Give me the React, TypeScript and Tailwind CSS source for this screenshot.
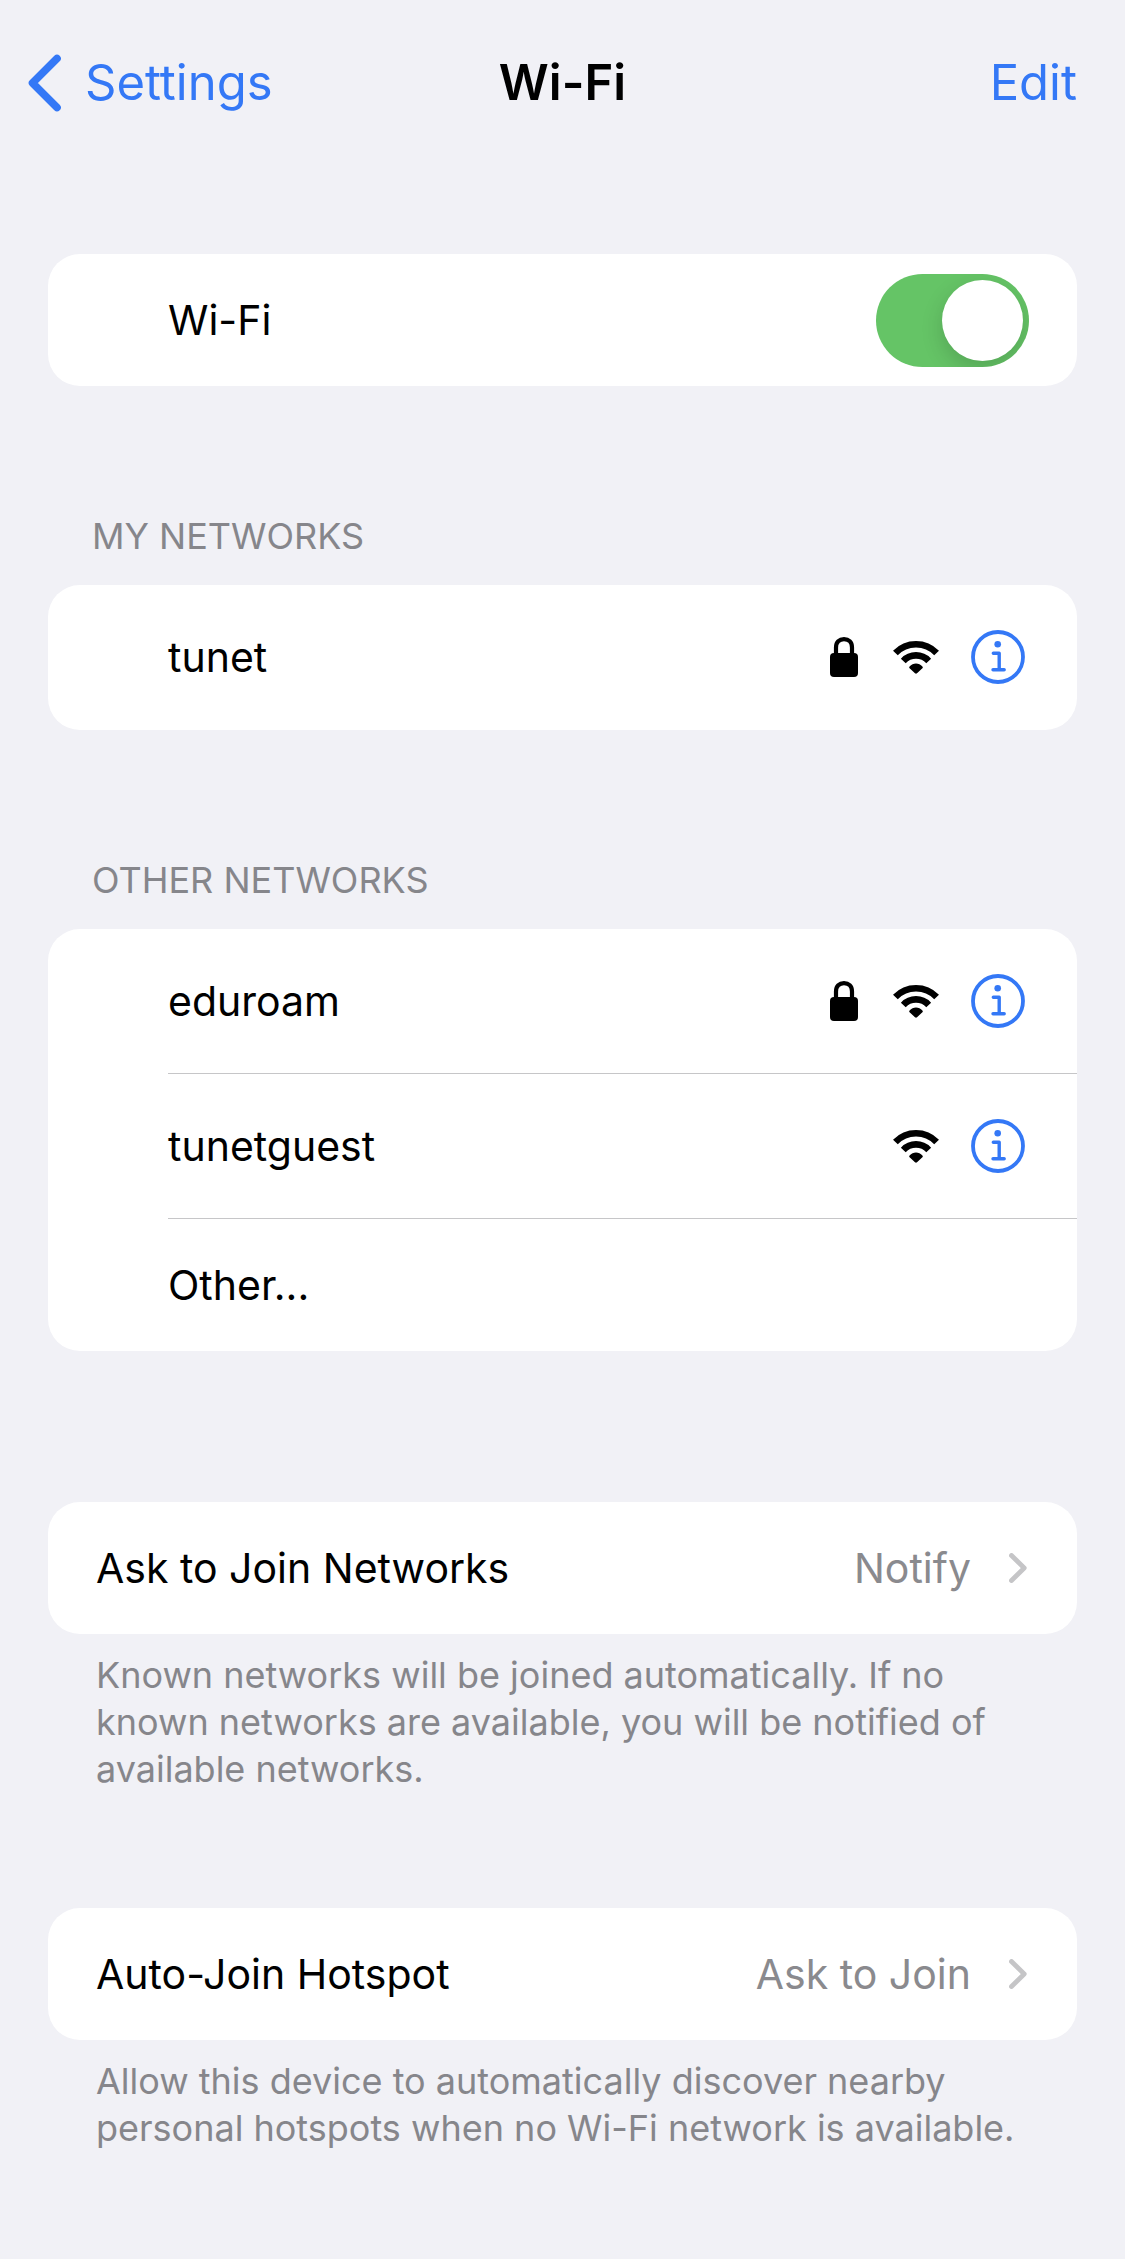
import React, { useState } from "react";

type Network = {
  name: string;
  secured: boolean;
};

const myNetworks: Network[] = [{ name: "tunet", secured: true }];

const otherNetworks: Network[] = [
  { name: "eduroam", secured: true },
  { name: "tunetguest", secured: false },
];

const LockIcon = () => (
  <svg width="28" height="40" viewBox="0 0 28 40" aria-hidden="true">
    <path
      d="M6 18V10.5C6 5.2 9.3 2.1 14 2.1S22 5.2 22 10.5V18"
      fill="none"
      stroke="currentColor"
      strokeWidth="4.2"
    />
    <rect y="16" width="28" height="24" rx="4" fill="currentColor" />
  </svg>
);

const WifiIcon = () => (
  <svg width="46" height="34" viewBox="0 0 46 34" aria-hidden="true">
    <g fill="none" stroke="currentColor" strokeWidth="6.6">
      <path d="M2.4 13A28.6 28.6 0 0 1 43.6 13" />
      <path d="M10.3 20.9A17.4 17.4 0 0 1 35.7 20.9" />
    </g>
    <path
      d="M16.6 26.6C20 22.4 26 22.4 29.4 26.6Q30.2 27.4 29.4 28.2L24 33.3Q23 34.2 22 33.3L16.6 28.2Q15.8 27.4 16.6 26.6Z"
      fill="currentColor"
    />
  </svg>
);

const InfoIcon = () => (
  <svg width="54" height="54" viewBox="0 0 54 54" aria-hidden="true">
    <circle
      cx="27"
      cy="27"
      r="25"
      fill="none"
      stroke="currentColor"
      strokeWidth="3.8"
    />
    <circle cx="26.7" cy="14.3" r="3.3" fill="currentColor" />
    <path
      d="M22.3 23.2H28.2V39.8M22 39.8H33.2"
      fill="none"
      stroke="currentColor"
      strokeWidth="3.4"
      strokeLinecap="round"
      strokeLinejoin="round"
    />
  </svg>
);

const BackIcon = () => (
  <svg width="33" height="58" viewBox="0 0 33 58" aria-hidden="true">
    <path
      d="M29 4.5L4.5 29L29 53.5"
      fill="none"
      stroke="currentColor"
      strokeWidth="7.6"
      strokeLinecap="round"
      strokeLinejoin="round"
    />
  </svg>
);

const ForwardIcon = () => (
  <svg width="18" height="30" viewBox="0 0 18 30" aria-hidden="true">
    <path
      d="M2.5 2.5L15.2 15L2.5 27.5"
      fill="none"
      stroke="#c5c5c7"
      strokeWidth="4.8"
      strokeLinecap="round"
      strokeLinejoin="round"
    />
  </svg>
);

const Card = ({ children }: { children: React.ReactNode }) => (
  <div className="overflow-hidden rounded-[32px] bg-white text-[41px] leading-[52px]">
    {children}
  </div>
);

interface NetworkRowProps {
  network: Network;
  divider?: boolean;
}

const NetworkRow = ({ network, divider }: NetworkRowProps) => (
  <li className="pl-30">
    <div
      className={`flex h-[145px] items-center border-b pr-[52px] ${
        divider ? "border-[#c6c6c8]" : "border-transparent"
      }`}
    >
      <span className="flex-1">{network.name}</span>
      {network.secured && (
        <span className="mr-[35px]">
          <LockIcon />
        </span>
      )}
      <WifiIcon />
      <button
        type="button"
        aria-label={`More info about ${network.name}`}
        className="ml-8 text-[#3478f6]"
      >
        <InfoIcon />
      </button>
    </div>
  </li>
);

interface DisclosureProps {
  label: string;
  value: string;
  note: string;
}

const Disclosure = ({ label, value, note }: DisclosureProps) => (
  <section>
    <Card>
      <button
        type="button"
        className="flex h-33 w-full items-center pr-[50px] pl-12 text-left"
      >
        <span className="flex-1">{label}</span>
        <span className="mr-[38px] text-[#8a8a8e]">{value}</span>
        <ForwardIcon />
      </button>
    </Card>
    <p className="px-12 pt-[18px] text-[36px] leading-[47px] text-[#86868b]">
      {note}
    </p>
  </section>
);

const SectionTitle = ({ children }: { children: React.ReactNode }) => (
  <h2 className="px-11 pt-[126px] pb-[25px] text-[36px] leading-[48px] text-[#86868b]">
    {children}
  </h2>
);

const App = () => {
  const [enabled, setEnabled] = useState(true);

  return (
    <div className="min-h-screen bg-[#f1f1f6] font-['Inter','Liberation_Sans',sans-serif] text-black">
      <header className="grid h-[166px] grid-cols-3 items-center pr-12 pl-7 text-[49px] leading-[60px]">
        <a href="#settings" className="flex items-center gap-6 text-[#3478f6]">
          <BackIcon />
          Settings
        </a>
        <h1 className="pl-5 text-center font-semibold">Wi-Fi</h1>
        <button type="button" className="justify-self-end text-[#3478f6]">
          Edit
        </button>
      </header>

      <main className="px-12 pt-22 pb-28">
        <Card>
          <div className="flex h-33 items-center justify-between pr-12 pl-30">
            <label htmlFor="wifi">Wi-Fi</label>
            <input
              id="wifi"
              type="checkbox"
              role="switch"
              checked={enabled}
              onChange={(e) => setEnabled(e.target.checked)}
              className="flex h-[93px] w-[153px] appearance-none items-center overflow-hidden rounded-full bg-[#e9e9eb] px-1.5 before:size-[81px] before:rounded-full before:bg-white before:shadow-[0_8px_22px_rgba(0,0,0,0.16)] checked:justify-end checked:bg-[#65c466]"
            />
          </div>
        </Card>

        <SectionTitle>MY NETWORKS</SectionTitle>
        <Card>
          <ul>
            {myNetworks.map((network) => (
              <NetworkRow key={network.name} network={network} />
            ))}
          </ul>
        </Card>

        <SectionTitle>OTHER NETWORKS</SectionTitle>
        <Card>
          <ul>
            {otherNetworks.map((network) => (
              <NetworkRow key={network.name} network={network} divider />
            ))}
            <li>
              <button type="button" className="h-33 w-full pl-30 text-left">
                Other...
              </button>
            </li>
          </ul>
        </Card>

        <div className="flex flex-col gap-[115px] pt-[151px]">
          <Disclosure
            label="Ask to Join Networks"
            value="Notify"
            note="Known networks will be joined automatically. If no known networks are available, you will be notified of available networks."
          />
          <Disclosure
            label="Auto-Join Hotspot"
            value="Ask to Join"
            note="Allow this device to automatically discover nearby personal hotspots when no Wi-Fi network is available."
          />
        </div>
      </main>
    </div>
  );
};

export default App;
